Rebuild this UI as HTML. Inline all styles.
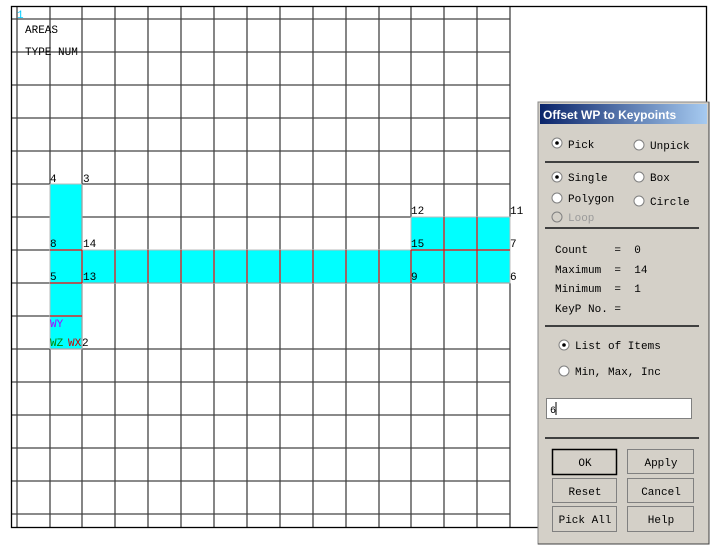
<!DOCTYPE html>
<html><head><meta charset="utf-8"><style>
html,body{margin:0;padding:0;background:#fff;width:720px;height:546px;overflow:hidden}
text{font-family:"Liberation Mono",monospace;font-size:11px;white-space:pre}
.d text{font-size:11px;fill:#000}
</style></head><body>
<svg width="720" height="546" xmlns="http://www.w3.org/2000/svg" xml:space="preserve">
<rect x="0" y="0" width="720" height="546" fill="#fff"/>
<g fill="#00ffff">
<rect x="50" y="184" width="32" height="165"/>
<rect x="82" y="250" width="428" height="33"/>
<rect x="411" y="217" width="99" height="33"/>
</g>
<g stroke="#444" stroke-width="1.3" fill="none">
<path d="M17 6V527M50 6V184M50 349V527M82 6V250M82 283V527M115 6V250M115 283V527M148 6V250M148 283V527M181 6V250M181 283V527M214 6V250M214 283V527M247 6V250M247 283V527M280 6V250M280 283V527M313 6V250M313 283V527M346 6V250M346 283V527M379 6V250M379 283V527M411 6V217M411 283V527M444 6V217M444 283V527M477 6V217M477 283V527M510 6V217M510 283V527"/>
<path d="M11 19H510M11 52H510M11 85H510M11 118H510M11 151H510M11 184H50M82 184H510M11 217H50M82 217H411M11 250H50M11 283H50M11 316H50M82 283H510M11 349H510M11 382H510M11 415H510M11 448H510M11 481H510M11 514H510"/>
</g>
<rect x="11.5" y="6.5" width="695" height="521" fill="none" stroke="#000" stroke-width="1.3"/>
<g stroke="#bbb" stroke-width="1" fill="none">
<path d="M50 184V349M82 184V250M50 184H82M82 250H411V217H510V283H82V349H50"/>
</g>
<g stroke="#f00" stroke-width="1.2" fill="none">
<path d="M50 250H82M50 283H82M50 316H82M82 250V283M115 250V283M148 250V283M181 250V283M214 250V283M247 250V283M280 250V283M313 250V283M346 250V283M379 250V283M411 250H510M444 217V283M477 217V283M411 250V283"/>
</g>
<text x="17" y="18" fill="#0cf" font-size="12">1</text>
<text x="25" y="33" fill="#000">AREAS</text>
<text x="25" y="55" fill="#000">TYPE NUM</text>
<g fill="#000">
<text x="50" y="182">4</text><text x="83" y="182">3</text>
<text x="50" y="247">8</text><text x="83" y="247">14</text>
<text x="50" y="280">5</text><text x="83" y="280">13</text>
<text x="411" y="214">12</text><text x="510" y="214">11</text>
<text x="411" y="247">15</text><text x="510" y="247">7</text>
<text x="411" y="280">9</text><text x="510" y="280">6</text>
<text x="82" y="346">2</text>
</g>
<text x="50" y="327" fill="#a0f">WY</text>
<text x="50" y="346" fill="#080">WZ</text>
<text x="68" y="346" fill="#c00">WX</text>
<g class="d">
<rect x="538" y="102" width="171" height="442" fill="#d4d0c8" stroke="#888"/>
<path d="M709 102V544H538" stroke="#404040" fill="none"/>
<defs><linearGradient id="tg" x1="0" x2="1"><stop offset="0" stop-color="#0a246a"/><stop offset="1" stop-color="#a6caf0"/></linearGradient></defs>
<rect x="540" y="104" width="167" height="20" fill="url(#tg)"/>
<text x="543" y="119" style="font-family:'Liberation Sans',sans-serif;font-weight:bold;font-size:12px;fill:#fff">Offset WP to Keypoints</text>
<g stroke="#404040" stroke-width="2"><path d="M545 162H699M545 228H699M545 326H699M545 438H699"/></g>
<g fill="#fff" stroke="#808080">
<circle cx="557" cy="143" r="5"/><circle cx="639" cy="145" r="5"/>
<circle cx="557" cy="177" r="5"/><circle cx="639" cy="177" r="5"/>
<circle cx="557" cy="198" r="5"/><circle cx="639" cy="201" r="5"/>
<circle cx="557" cy="217" r="5" fill="#d4d0c8"/>
<circle cx="564" cy="345" r="5"/><circle cx="564" cy="371" r="5"/>
</g>
<g fill="#000"><circle cx="557" cy="143" r="1.8"/><circle cx="557" cy="177" r="1.8"/><circle cx="564" cy="345" r="1.8"/></g>
<text x="568" y="148">Pick</text><text x="650" y="149">Unpick</text>
<text x="568" y="181">Single</text><text x="650" y="181">Box</text>
<text x="568" y="202">Polygon</text><text x="650" y="205">Circle</text>
<text x="568" y="221" style="fill:#9a9a9a">Loop</text>
<text x="555" y="253">Count    =  0</text>
<text x="555" y="273">Maximum  =  14</text>
<text x="555" y="292">Minimum  =  1</text>
<text x="555" y="312">KeyP No. =</text>
<text x="575" y="349">List of Items</text>
<text x="575" y="375">Min, Max, Inc</text>
<rect x="546.5" y="398.5" width="145" height="20" fill="#fff" stroke="#808080"/>
<text x="550" y="413" style="font-size:10px">6</text><path d="M556 402V415" stroke="#000"/>
<g fill="#d4d0c8" stroke="#808080">
<rect x="552.5" y="449.5" width="64" height="25" stroke="#000" stroke-width="1.5"/>
<rect x="627.5" y="449.5" width="66" height="24"/>
<rect x="552.5" y="478.5" width="64" height="24"/><rect x="627.5" y="478.5" width="66" height="24"/>
<rect x="552.5" y="506.5" width="64" height="25"/><rect x="627.5" y="506.5" width="66" height="25"/>
</g>
<text x="585" y="466" text-anchor="middle">OK</text><text x="661" y="466" text-anchor="middle">Apply</text>
<text x="585" y="495" text-anchor="middle">Reset</text><text x="661" y="495" text-anchor="middle">Cancel</text>
<text x="585" y="523" text-anchor="middle">Pick All</text><text x="661" y="523" text-anchor="middle">Help</text>
</g>
</svg>
</body></html>
